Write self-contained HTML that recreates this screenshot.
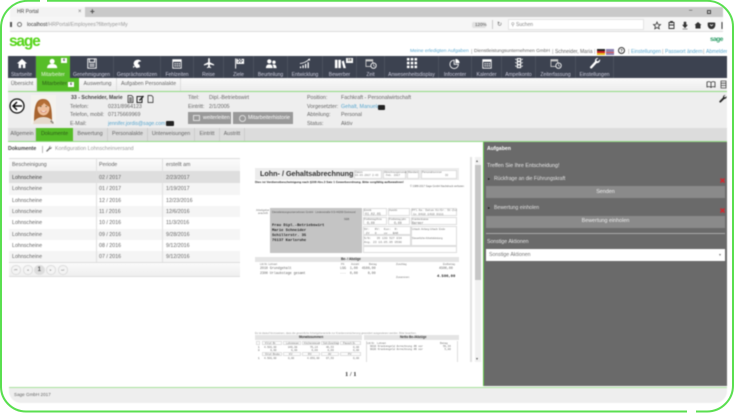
<!DOCTYPE html>
<html lang="de">
<head>
<meta charset="utf-8">
<title>HR Portal</title>
<style>
html,body{margin:0;padding:0;background:#fff}
#p{position:relative;width:735px;height:413px;overflow:hidden;background:#fff;font-family:"Liberation Sans",sans-serif;color:#666}
#c{position:absolute;left:0;top:0;width:735px;height:413px;filter:blur(.4px)}
.t{position:absolute;white-space:nowrap;font-size:5.3px;line-height:8px;height:8px}
.b{position:absolute}
.n{position:absolute;top:56px;height:22px;border-right:1px solid #4b525e;box-sizing:border-box}
.n span{position:absolute;left:-20px;right:-20px;bottom:-.5px;text-align:center;color:#ccd;font-size:5px;line-height:7px;white-space:nowrap}
.n svg{position:absolute;left:50%;top:2px;width:12px;height:11px;margin-left:-6px}
.s{position:absolute;top:78px;height:13px;border-right:1px solid #ddd;box-sizing:border-box;text-align:center;font-size:5.3px;line-height:13px;color:#666;white-space:nowrap}
.tb{position:absolute;top:128px;height:13px;border-right:1px solid #ccc;box-sizing:border-box;text-align:center;font-size:5.3px;line-height:13px;color:#666;white-space:nowrap}
.r{position:absolute;left:9px;width:231px;height:11.3px}
.r i{position:absolute;top:2px;font-style:normal;font-size:5.3px;line-height:8px;color:#666;white-space:nowrap}
.r i:nth-child(1){left:3px}.r i:nth-child(2){left:90px}.r i:nth-child(3){left:157px}
.pg{position:absolute;top:265px;width:9.5px;height:9.5px;border:1px solid #ddd;border-radius:50%;box-sizing:border-box;text-align:center;font-size:3.5px;line-height:8px;color:#999;background:#f4f4f4}
.d{position:absolute;white-space:nowrap;color:#777;font-size:2.6px;line-height:3px}
.m{font-family:"Liberation Mono",monospace}
.bx{position:absolute;border:.5px solid #ddd;box-sizing:border-box;background:#fff}
</style>
</head>
<body>
<div id="p"><div id="c">

<!-- browser chrome -->
<div class="b" style="left:10px;top:7px;width:713px;height:10px;background:#c9c9c9"></div>
<div class="b" style="left:10px;top:7px;width:75px;height:10px;background:#f3f3f3"></div>
<div class="t" style="left:17px;top:8px;color:#444;font-size:5px">HR Portal</div>
<div class="t" style="left:78px;top:8px;color:#777;font-size:6px">×</div>
<div class="t" style="left:90px;top:8px;color:#444;font-size:8px;font-weight:bold">+</div>
<div class="t" style="left:689px;top:7px;color:#333;font-size:6px">–</div>
<div class="b" style="left:707px;top:10px;width:4px;height:4px;border:.7px solid #444;box-sizing:border-box"></div>
<div class="b" style="left:10px;top:17px;width:713px;height:15px;background:#f6f6f6;border-bottom:1px solid #ddd;box-sizing:border-box"></div>
<div class="b" style="left:10px;top:22px;width:2px;height:5px;background:#555"></div>
<div class="b" style="left:17px;top:22px;width:5px;height:5px;border:.6px solid #777;border-radius:50%;box-sizing:border-box"></div>
<div class="t" style="left:27px;top:21px;color:#999;font-size:5.1px"><span style="color:#333">localhost</span>/HRPortal/Employees?filtertype=My</div>
<div class="b" style="left:472px;top:22px;width:14px;height:6px;background:#e2e2e2;border-radius:2px"></div>
<div class="t" style="left:475px;top:21px;color:#555;font-size:4.6px">120%</div>
<div class="b" style="left:492px;top:20px;width:.7px;height:9px;background:#ccc"></div>
<div class="t" style="left:497px;top:21px;color:#666;font-size:6px">↻</div>
<div class="b" style="left:508px;top:19px;width:136px;height:11px;background:#fff;border:.5px solid #e4e4e4;box-sizing:border-box"></div>
<div class="t" style="left:511px;top:21px;color:#888;font-size:5px">⚲ Suchen</div>
<svg class="b" style="left:650px;top:19px" width="74" height="12" viewBox="0 0 74 12">
<path d="M7 3l1 2.4 2.5.2-1.9 1.7.6 2.5L7 8.5 4.800 9.800l.6-2.500-1.900-1.700 2.500-.2z" fill="none" stroke="#333" stroke-width=".8"/>
<path d="M19 3.500h5v6h-5zM20.500 3.500v-1h2v1M19 6h5" fill="none" stroke="#333" stroke-width=".9"/>
<path d="M34 3v3h-1.500l2.500 3 2.500-3H36V3zM32.500 10h5" fill="#333" stroke="#333" stroke-width=".5"/>
<path d="M48 3l3.500 3H50.500v3.500h-5V6h-1z" fill="#333"/>
<path d="M58.500 3.500h6a.8.8 0 0 1 .8.8v2a3.800 3.800 0 0 1-7.600 0v-2a.8.8 0 0 1 .8-.8z" fill="#333"/><path d="M60 5.500l1.500 1.300L63 5.500" stroke="#fff" fill="none" stroke-width=".8"/>
<path d="M72 3v7" stroke="#333"/>
</svg>

<!-- page header -->
<div class="t" style="left:9px;top:33px;height:17px;line-height:17px;color:#56d51a;font-size:15.500px;font-weight:bold;letter-spacing:-1.200px">sage</div>
<div class="t" style="left:710px;top:36px;color:#2f9e68;font-size:6.500px;font-weight:bold;letter-spacing:-.5px">sage</div>
<div class="t" style="left:410px;top:48px;color:#5aa7cf;font-size:4.950px">Meine erledigten Aufgaben</div>
<div class="t" style="left:471px;top:48px;color:#999;font-size:5px">|</div>
<div class="t" style="left:474px;top:48px;color:#666;font-size:4.800px">Dienstleistungsunternehmen GmbH</div>
<div class="t" style="left:552px;top:48px;color:#999;font-size:5px">|</div>
<div class="t" style="left:555px;top:48px;color:#666;font-size:5px">Schneider, Maria</div>
<div class="t" style="left:594px;top:48px;color:#999;font-size:5px">|</div>
<div class="b" style="left:597px;top:49px;width:8px;height:6px;background:linear-gradient(#222 33%,#c22 33%,#c22 66%,#e8c020 66%)"></div>
<div class="b" style="left:606px;top:49px;width:8px;height:6px;background:#8a80b0"></div>
<div class="b" style="left:606px;top:51.500px;width:8px;height:1px;background:#d55"></div>
<div class="b" style="left:618px;top:47px;width:7px;height:7px;border:.8px solid #333;border-radius:50%;box-sizing:border-box;font-size:4.500px;line-height:5.500px;text-align:center;color:#333;font-weight:bold">?</div>
<div class="t" style="left:628px;top:48px;color:#999;font-size:5px">|</div>
<div class="t" style="left:631px;top:48px;color:#5aa7cf;font-size:5px">Einstellungen</div>
<div class="t" style="left:662px;top:48px;color:#999;font-size:5px">|</div>
<div class="t" style="left:665px;top:48px;color:#5aa7cf;font-size:5px">Passwort ändern</div>
<div class="t" style="left:703px;top:48px;color:#999;font-size:5px">|</div>
<div class="t" style="left:706px;top:48px;width:21px;overflow:hidden;color:#5aa7cf;font-size:5px">Abmelden</div>

<!-- nav -->
<div class="b" style="left:8px;top:55.500px;width:719px;height:23px;background:#3c4250"></div>
<div class="n" style="left:8px;width:28px"><svg viewBox="0 0 14 13"><path d="M7 1L1 6.500h2V12h3V8h2v4h3V6.500h2z" fill="#fff"/></svg><span>Startseite</span></div>
<div class="n" style="left:36px;width:34px;background:#56bd28;border:0"><svg viewBox="0 0 14 13"><circle cx="6" cy="4" r="3" fill="#fff"/><path d="M0 12c0-4 3-5 6-5s6 1 6 5z" fill="#fff"/></svg><span style="color:#e8f5e0">Mitarbeiter</span></div>
<div class="b" style="left:61px;top:58px;width:6px;height:5px;background:#fff;color:#333;font-size:3.800px;line-height:5px;text-align:center;font-weight:bold">6</div>
<div class="n" style="left:70px;width:44px"><svg viewBox="0 0 14 13"><path d="M2 1h10v11H2zM4 1v4h6V1M4 7.500h6M4 9.500h6" fill="none" stroke="#fff" stroke-width="1.100"/></svg><span>Genehmigungen</span></div>
<div class="n" style="left:114px;width:47px"><svg viewBox="0 0 14 13"><path d="M3 7a5 5 0 0 1 9-3L9 4.500 8 7l2 1 .5 3-4 1-2-2z" fill="#fff"/><path d="M4.500 10l-2 2v-3" fill="#fff"/></svg><span>Gesprächsnotizen</span></div>
<div class="n" style="left:161px;width:33px"><svg viewBox="0 0 14 13"><path d="M2 2h10v10H2z" fill="none" stroke="#fff"/><path d="M2 2h10v2.500H2z" fill="#fff"/><path d="M4 6h1.500v1.500H4zM6.500 6H8v1.500H6.500zM9 6h1.500v1.500H9zM4 8.500h1.500V10H4zM6.500 8.500H8V10H6.500zM9 8.500h1.500V10H9z" fill="#fff"/></svg><span>Fehlzeiten</span></div>
<div class="n" style="left:194px;width:30px"><svg viewBox="0 0 14 13"><path d="M7 0c.7 0 1 .8 1 1.500V5l5 2.500v1.300L8 7.500V10l1.500 1.200V12L7 11.400 4.500 12v-.8L6 10V7.500L1 8.800V7.500L6 5V1.500C6 .8 6.300 0 7 0z" fill="#fff"/></svg><span>Reise</span></div>
<div class="n" style="left:224px;width:30px"><svg viewBox="0 0 14 13"><path d="M3 0.500v12" stroke="#fff" stroke-width="1.200"/><path d="M4 1h9v6H4z" fill="#fff"/><path d="M5.500 1h1.500v1.500H5.500zM8.500 1H10v1.500H8.500zM7 2.500h1.500V4H7zM10 2.500h1.500V4H10zM5.500 4H7v1.500H5.500zM8.500 4H10v1.500H8.500z" fill="#3c4250"/></svg><span>Ziele</span></div>
<div class="n" style="left:254px;width:34px"><svg viewBox="0 0 14 13"><circle cx="5" cy="4" r="2.500" fill="#fff"/><circle cx="10.500" cy="5" r="2" fill="#fff"/><path d="M1 12c0-3.500 2-4.500 4-4.500s4 1 4 4.500zM9.800 12c0-2-.3-3.200-1.200-4 3-1 5 .5 5 4z" fill="#fff"/></svg><span>Beurteilung</span></div>
<div class="n" style="left:288px;width:35px"><svg viewBox="0 0 14 13"><path d="M1 10h1.500v2H1zM4 8.500h1.500V12H4zM7 7h1.500v5H7zM10 5h1.500v7H10z" fill="#fff"/><path d="M1 6.500Q7 6 12 1.500" fill="none" stroke="#fff"/><path d="M13 .5l-.2 3-2.500-2z" fill="#fff"/></svg><span>Entwicklung</span></div>
<div class="n" style="left:323px;width:34px"><svg viewBox="0 0 14 13"><path d="M1 2h3v10H1zM5 2h3v10H5zM9 4l2.500-1L14 12h-3z" fill="#fff"/></svg><span>Bewerber</span></div>
<div class="b" style="left:346px;top:58px;width:7px;height:5px;background:#fff;color:#333;font-size:3.800px;line-height:5px;text-align:center;font-weight:bold">18</div>
<div class="n" style="left:357px;width:28px"><svg viewBox="0 0 14 13"><path d="M1 2h8v8H1z" fill="none" stroke="#ccc"/><path d="M1 2h8v2H1z" fill="#ccc"/><circle cx="10" cy="9" r="3.200" fill="#3c4250" stroke="#fff"/><path d="M10 7v2l1.500 1" fill="none" stroke="#fff" stroke-width=".7"/></svg><span>Zeit</span></div>
<div class="n" style="left:385px;width:54px"><svg viewBox="0 0 14 13"><path d="M1 0h3v3H1zM5.500 0h3v3h-3zM10 0h3v3h-3zM1 4.500h3v3H1zM5.500 4.500h3v3h-3zM10 4.500h3v3h-3zM1 9h3v3H1zM5.500 9h3v3h-3zM10 9h3v3h-3z" fill="#fff"/></svg><span>Anwesenheitsdisplay</span></div>
<div class="n" style="left:439px;width:33px"><svg viewBox="0 0 14 13"><path d="M6 2.500a5 5 0 1 0 5 5H6z" fill="none" stroke="#fff"/><path d="M7.500 1a5 5 0 0 1 5 5h-5z" fill="#fff"/></svg><span>Infocenter</span></div>
<div class="n" style="left:472px;width:30px"><svg viewBox="0 0 14 13"><path d="M2 2h10v10H2z" fill="none" stroke="#fff"/><path d="M2 2h10v2.500H2z" fill="#fff"/><path d="M4 6h1.500v1.500H4zM6.500 6H8v1.500H6.500zM9 6h1.500v1.500H9zM4 8.500h1.500V10H4zM6.500 8.500H8V10H6.500zM9 8.500h1.500V10H9z" fill="#fff"/></svg><span>Kalender</span></div>
<div class="n" style="left:502px;width:34px"><svg viewBox="0 0 14 13"><path d="M4.500 0h5v12h-5z" fill="#fff"/><path d="M2 1h2v2zM12 1h-2v2zM2 5h2v2zM12 5h-2v2zM2 9h2v2zM12 9h-2v2z" fill="#fff"/><circle cx="7" cy="2.200" r="1.200" fill="#3c4250"/><circle cx="7" cy="6" r="1.200" fill="#3c4250"/><circle cx="7" cy="9.800" r="1.200" fill="#3c4250"/></svg><span>Ampelkonto</span></div>
<div class="n" style="left:536px;width:40px"><svg viewBox="0 0 14 13"><path d="M1 2h8v8H1z" fill="none" stroke="#ccc"/><path d="M1 2h8v2H1z" fill="#ccc"/><circle cx="10" cy="9" r="3.200" fill="#3c4250" stroke="#fff"/><path d="M10 7v2l1.500 1" fill="none" stroke="#fff" stroke-width=".7"/></svg><span>Zeiterfassung</span></div>
<div class="n" style="left:576px;width:38px"><svg viewBox="0 0 14 13"><path d="M13 1.500L10.500 4l-1.500-.5L8.500 2 11 0C8.500-.5 6.500 1.500 7 4L1.500 10a1.400 1.400 0 0 0 2 2L9 6c2.500.5 4.500-2 4-4.500z" fill="#fff"/></svg><span>Einstellungen</span></div>

<!-- subnav -->
<div class="b" style="left:8px;top:78px;width:719px;height:13px;background:linear-gradient(#fafafa,#ececec)"></div>
<div class="s" style="left:8px;width:29px">Übersicht</div>
<div class="s" style="left:37px;width:42px;background:#56bd28;color:#2d5c18;border:0;text-align:left;padding-left:5px">Mitarbeiter</div>
<div class="b" style="left:68px;top:81.500px;width:6px;height:5.500px;background:#fff;color:#333;font-size:3.800px;line-height:5.500px;text-align:center;font-weight:bold">6</div>
<div class="s" style="left:79px;width:38px">Auswertung</div>
<div class="s" style="left:117px;width:64px">Aufgaben Personalakte</div>
<svg class="b" style="left:705px;top:80px" width="22" height="9" viewBox="0 0 22 9"><path d="M2 2c1.500-.5 3-.5 4 .5 1-1 2.500-1 4-.5v5c-1.500-.5-3-.5-4 .5-1-1-2.500-1-4-.5zM6 2.500v5" fill="none" stroke="#333" stroke-width=".8"/><path d="M16 1h5v7h-5zM16 3.200h5M16 5.500h5" fill="none" stroke="#444" stroke-width=".8"/></svg>
<div class="b" style="left:8px;top:91px;width:719px;height:1px;background:#92dc83"></div>

<!-- employee header -->
<div class="b" style="left:8px;top:92px;width:719px;height:36px;background:#eee"></div>
<svg class="b" style="left:9px;top:98px" width="16" height="16" viewBox="0 0 16 16"><circle cx="8" cy="8" r="7" fill="#fff" stroke="#111" stroke-width="1.300"/><path d="M13 8H4M8 4L4 8l4 4" fill="none" stroke="#111" stroke-width="1.500"/></svg>
<svg class="b" style="left:31px;top:95px" width="25" height="29" viewBox="0 0 25 29"><rect width="25" height="29" fill="#f4f2ee"/><path d="M3 28c0-14 1-24 9-24s9 9 9 24z" fill="#a8642f"/><ellipse cx="12.500" cy="13" rx="6" ry="7.500" fill="#eebf9c"/><path d="M6 12c1-6 5-7 7-7s5 2 6 7c-3-1-5-3-6-4-1 2-4 4-7 4z" fill="#b46f36"/><path d="M2 29c1-5 6-7 10.500-7s9 2 10.500 7z" fill="#e6d9cc"/><path d="M9.500 16q3 2.500 6 0" fill="#fff" stroke="#c56a5c" stroke-width=".6"/><path d="M9 11.500h1.500M14.500 11.500H16" stroke="#553" stroke-width=".8"/></svg>
<div class="t" style="left:50px;top:119px;color:#444;font-size:5px">✎</div>

<div class="t" style="left:71px;top:94px;color:#444;font-weight:bold;font-size:5.200px">33 - Schneider, Marie</div>
<svg class="b" style="left:127px;top:95px" width="28" height="8" viewBox="0 0 28 8"><path d="M1 .5h3.500L6 2v5.500H1zM2 3h3M2 4.500h3M2 6h3" fill="none" stroke="#222" stroke-width=".7"/><path d="M10 1.500h5v6h-5z" fill="none" stroke="#222"/><path d="M12 5l4-4.500 1 1-4 4.500z" fill="#222"/><path d="M21 .5h3.500L26 2v5.500h-5z" fill="none" stroke="#222" stroke-width=".7"/></svg>
<div class="t" style="left:70px;top:103px">Telefon:</div><div class="t" style="left:108px;top:103px">0231/8964123</div>
<div class="t" style="left:70px;top:111px">Telefon, mobil:</div><div class="t" style="left:108px;top:111px">07175669969</div>
<div class="t" style="left:70px;top:119.500px">E-Mail:</div><div class="t" style="left:108px;top:119.500px;color:#5aa7cf;font-size:5.100px">jennifer.jordis@sage.com</div>
<div class="b" style="left:166px;top:121px;width:8px;height:5px;background:#222;border-radius:1px"></div>

<div class="t" style="left:188px;top:94px">Titel:</div><div class="t" style="left:209px;top:94px">Dipl.-Betriebswirt</div>
<div class="t" style="left:188px;top:103px">Eintritt:</div><div class="t" style="left:209px;top:103px">2/1/2005</div>
<div class="b" style="left:188px;top:112px;width:43px;height:12px;background:#999;color:#fff;font-size:5.300px;line-height:12px;text-indent:15px;white-space:nowrap">weiterleiten</div>
<div class="b" style="left:193px;top:115px;width:7px;height:5.500px;border:.7px solid #ddd;box-sizing:border-box"></div>
<div class="b" style="left:233px;top:112px;width:60px;height:12px;background:#999;color:#fff;font-size:5.300px;line-height:12px;text-indent:15px;white-space:nowrap">Mitarbeiterhistorie</div>
<div class="b" style="left:239px;top:114.500px;width:7px;height:7px;border:.8px solid #ddd;border-radius:50%;box-sizing:border-box"></div>

<div class="t" style="left:307px;top:94px">Position:</div><div class="t" style="left:341px;top:94px">Fachkraft - Personalwirtschaft</div>
<div class="t" style="left:307px;top:103px">Vorgesetzter:</div><div class="t" style="left:341px;top:103px;color:#5aa7cf">Gehalt, Manuela</div>
<div class="b" style="left:378px;top:104.500px;width:7px;height:5px;background:#222;border-radius:1px"></div>
<div class="t" style="left:307px;top:111px">Abteilung:</div><div class="t" style="left:341px;top:111px">Personal</div>
<div class="t" style="left:307px;top:119.500px">Status:</div><div class="t" style="left:341px;top:119.500px">Aktiv</div>
<svg class="b" style="left:719px;top:95px" width="8" height="8" viewBox="0 0 8 8"><path d="M7.500 1.200L6 2.500 5.300 2 5 1.300 6.500 0C5-.2 3.800 1 4 2.500L.6 6A.9.900 0 0 0 1.900 7.300L5.300 4C6.800 4.200 8 2.800 7.500 1.200z" fill="#222"/></svg>

<!-- tabs -->
<div class="b" style="left:8px;top:128px;width:719px;height:13px;background:#dcdcdc"></div>
<div class="tb" style="left:9px;width:27px">Allgemein</div>
<div class="tb" style="left:36px;width:37px;background:#56bd28;color:#2d5c18;border:0">Dokumente</div>
<div class="tb" style="left:73px;width:35px">Bewertung</div>
<div class="tb" style="left:108px;width:40px">Personalakte</div>
<div class="tb" style="left:148px;width:47px">Unterweisungen</div>
<div class="tb" style="left:195px;width:25px">Eintritt</div>
<div class="tb" style="left:220px;width:25px">Austritt</div>
<div class="b" style="left:8px;top:141px;width:719px;height:1px;background:#92dc83"></div>

<!-- doc list -->
<div class="t" style="left:8px;top:145px;color:#444;font-weight:bold;font-size:5.200px">Dokumente</div>
<div class="b" style="left:41.500px;top:146px;width:.5px;height:7px;background:#bbb"></div>
<svg class="b" style="left:46px;top:146px" width="6" height="6" viewBox="0 0 8 8"><path d="M7.500 1.200L6 2.500 5.300 2 5 1.300 6.500 0C5-.2 3.800 1 4 2.500L.6 6A.9.900 0 0 0 1.900 7.300L5.300 4C6.800 4.200 8 2.800 7.500 1.200z" fill="#777"/></svg>
<div class="t" style="left:55px;top:145px;color:#999">Konfiguration Lohnscheinversand</div>

<div class="b" style="left:9px;top:158px;width:231px;height:14px;background:linear-gradient(#fbfbfb,#f2f2f2);border-top:.5px solid #ddd;border-bottom:.5px solid #ddd;box-sizing:border-box"></div>
<div class="t" style="left:12px;top:161px;color:#666">Bescheinigung</div>
<div class="t" style="left:99px;top:161px;color:#666">Periode</div>
<div class="t" style="left:166px;top:161px;color:#666">erstellt am</div>

<div class="r" style="top:172px;background:#dedede"><i style="color:#444">Lohnscheine</i><i>02 / 2017</i><i>2/23/2017</i></div>
<div class="r" style="top:183.300px;background:#f5f5f5"><i>Lohnscheine</i><i>01 / 2017</i><i>1/19/2017</i></div>
<div class="r" style="top:194.600px;background:#fff"><i>Lohnscheine</i><i>12 / 2016</i><i>12/23/2016</i></div>
<div class="r" style="top:205.900px;background:#f5f5f5"><i>Lohnscheine</i><i>11 / 2016</i><i>12/6/2016</i></div>
<div class="r" style="top:217.200px;background:#fff"><i>Lohnscheine</i><i>10 / 2016</i><i>11/3/2016</i></div>
<div class="r" style="top:228.500px;background:#f5f5f5"><i>Lohnscheine</i><i>09 / 2016</i><i>9/28/2016</i></div>
<div class="r" style="top:239.800px;background:#fff"><i>Lohnscheine</i><i>08 / 2016</i><i>9/12/2016</i></div>
<div class="r" style="top:251.100px;background:#f5f5f5"><i>Lohnscheine</i><i>07 / 2016</i><i>9/12/2016</i></div>
<div class="b" style="left:96px;top:158px;width:.5px;height:104px;background:#e0e0e0"></div>
<div class="b" style="left:162px;top:158px;width:.5px;height:104px;background:#e0e0e0"></div>
<div class="b" style="left:9px;top:262px;width:231px;height:15px;background:linear-gradient(#fafafa,#efefef);border-top:.5px solid #ddd;border-bottom:.5px solid #ddd;box-sizing:border-box"></div>
<div class="pg" style="left:11px">⏮</div>
<div class="pg" style="left:23px">◂</div>
<div class="pg" style="left:34px;width:10.500px;height:10.500px;top:264.500px;background:#ddd;color:#555;font-size:6px;line-height:9px;font-weight:bold">1</div>
<div class="pg" style="left:46px">▸</div>
<div class="pg" style="left:58px">⏭</div>

<!-- pdf preview -->
<div class="b" style="left:255px;top:168px;width:204px;height:12px;background:#ececec"></div>
<div class="t" style="left:260px;top:169px;height:10px;line-height:10px;color:#333;font-size:7.200px;font-weight:bold">Lohn- / Gehaltsabrechnung</div>
<div class="bx" style="left:354px;top:170px;width:28px;height:8.500px"></div>
<div class="bx" style="left:383px;top:170px;width:23px;height:8.500px"></div>
<div class="bx" style="left:407px;top:170px;width:12px;height:8.500px"></div>
<div class="bx" style="left:421px;top:170px;width:36px;height:8.500px"></div>
<div class="d" style="left:355px;top:170.500px">Datum</div><div class="d m" style="left:355px;top:174px">03.03.2017 2:43</div>
<div class="d" style="left:384px;top:170.500px">Abrechnungsmonat</div><div class="d m" style="left:386px;top:174px">Feb. 2017</div>
<div class="d" style="left:408px;top:170.500px">Mandant</div>
<div class="d" style="left:422px;top:170.500px">Personalnummer</div><div class="d m" style="left:445px;top:174px">33</div>
<div class="d" style="left:255px;top:180.500px;color:#222;font-weight:bold;font-size:3px;line-height:3.500px">Dies ist Verdienstbescheinigung nach §108 Abs.3 Satz 1 Gewerbeordnung. Bitte sorgfältig aufbewahren!</div>
<div class="d" style="left:410px;top:184.500px;color:#666">© 1988-2017 Sage GmbH Nachdruck verboten</div>

<div class="d" style="left:256px;top:209px">Arbeitgeber</div><div class="d" style="left:258px;top:212px">anschrift</div>
<div class="b" style="left:270px;top:208px;width:92px;height:45px;background:#c4c4c4"></div>
<div class="d" style="left:272px;top:210.500px;color:#555">Dienstleistungsunternehmen GmbH · Lindenstraße 9 D-44269 Dortmund</div>
<div class="d" style="left:344px;top:218px;color:#555">SEB</div>
<div class="d m" style="left:272px;top:223.500px;color:#222;font-size:3.800px;line-height:5px;font-weight:bold;white-space:pre">Frau Dipl.-Betriebswirt
Marie Schneider
Schillerstr. 35
76137 Karlsruhe</div>

<div class="bx" style="left:363px;top:208px;width:24px;height:8px"></div>
<div class="d" style="left:364px;top:208.500px">Eintritt</div><div class="d m" style="left:365px;top:212px;font-size:3.300px;line-height:4px">01.02.05</div>
<div class="bx" style="left:388px;top:208px;width:22px;height:8px"></div><div class="d" style="left:389px;top:208.500px">Austritt</div>
<div class="bx" style="left:411px;top:208px;width:46px;height:8px"></div>
<div class="d m" style="left:412px;top:209px;font-size:2.800px;line-height:3.500px">Pfl.Ka. Datum Kz/Gr. St-Zst</div>
<div class="d m" style="left:413px;top:212.500px;font-size:3px;line-height:3.500px">1x  0410 1410 0111</div>
<div class="bx" style="left:363px;top:217px;width:24px;height:8px"></div><div class="d" style="left:364px;top:217.500px">Freibetrag/Anw.</div><div class="d m" style="left:367px;top:221px;font-size:3.200px;line-height:4px">0,00</div>
<div class="bx" style="left:388px;top:217px;width:22px;height:8px"></div><div class="d" style="left:389px;top:217.500px">Freibetrag jahr.</div><div class="d m" style="left:394px;top:221px;font-size:3.200px;line-height:4px">0,00</div>
<div class="bx" style="left:411px;top:217px;width:46px;height:8px"></div><div class="d" style="left:412px;top:217.500px">Krankenkasse</div><div class="d m" style="left:412px;top:221px;font-size:3.200px;line-height:4px">Barmer</div>
<div class="bx" style="left:363px;top:226px;width:48px;height:9px"></div><div class="d m" style="left:364px;top:228px;font-size:3px;line-height:3.500px;white-space:pre">SV:   RV:  Kon:  R:
 2V   0    uv   BAR</div>
<div class="bx" style="left:363px;top:235px;width:48px;height:11px"></div><div class="d m" style="left:364px;top:237px;font-size:3px;line-height:4px;white-space:pre">S/N:   35 130 527 034
Ang. 23 16.05.05 0500</div>
<div class="bx" style="left:411px;top:226px;width:46px;height:20px"></div>
<div class="d" style="left:412px;top:228px">Urlaub: Anfang     Urlaub: Ende</div>
<div class="d" style="left:412px;top:237px">Steuerliche Arbeitsleistung</div>
<div class="bx" style="left:363px;top:246px;width:94px;height:7px"></div>

<div class="b" style="left:255px;top:257px;width:204px;height:5px;background:#e4e4e4"></div>
<div class="d" style="left:341px;top:258px;color:#333;font-weight:bold;font-size:3.300px">Be- / Abzüge</div>
<div class="d" style="left:260px;top:263px">Lfd.Nr.    Lohnart</div>
<div class="d" style="left:341px;top:263px">PK</div><div class="d" style="left:351px;top:263px">Anzahl</div><div class="d" style="left:369px;top:263px">Betrag</div><div class="d" style="left:396px;top:263px">Zuschlag</div><div class="d" style="left:443px;top:263px">Endbetrag</div>
<div class="d m" style="left:260px;top:266px;font-size:3.300px;line-height:5px;white-space:pre;color:#666">2010 Grundgehalt
2300 Urlaubstage gesamt</div>
<div class="d m" style="left:340px;top:266px;font-size:3.300px;line-height:5px;white-space:pre;color:#666">LGG  1,00  4500,00
---  0,00     0,00</div>
<div class="d m" style="left:439px;top:266px;font-size:3.300px;line-height:5px;color:#666">4500,00</div>
<div class="d" style="left:396px;top:276px">Zusammen:</div>
<div class="d m" style="left:437px;top:275px;color:#222;font-weight:bold;font-size:3.800px;line-height:5px">4.500,00</div>

<div class="d" style="left:255px;top:332px;color:#999">Es ist darauf hinzuweisen, dass die gesetzliche Arbeitgeberanteile zur Krankenversicherung gesondert ausgewiesen werden. Bitte beachten.</div>
<div class="b" style="left:255px;top:335px;width:107px;height:5px;background:#e4e4e4"></div>
<div class="d" style="left:299px;top:336px;color:#333;font-weight:bold;font-size:3.200px">Monatssummen</div>
<div class="b" style="left:364px;top:335px;width:95px;height:5px;background:#e4e4e4"></div>
<div class="d" style="left:400px;top:336px;color:#333;font-weight:bold;font-size:3.200px">Netto Be-/Abzüge</div>
<div class="bx" style="left:256px;top:341px;width:4px;height:4px"></div><div class="bx" style="left:262px;top:341px;width:20px;height:4px"></div><div class="bx" style="left:283px;top:341px;width:18px;height:4px"></div><div class="bx" style="left:302px;top:341px;width:18px;height:4px"></div><div class="bx" style="left:321px;top:341px;width:18px;height:4px"></div><div class="bx" style="left:340px;top:341px;width:21px;height:4px"></div>
<div class="d" style="left:265px;top:341.500px">KV-pf. Br.</div><div class="d" style="left:286px;top:341.500px">Lohnsteuer</div><div class="d" style="left:304px;top:341.500px">Kirchensteuer</div><div class="d" style="left:323px;top:341.500px">Soli-Zuschlag</div><div class="d" style="left:343px;top:341.500px">Pausch.St.</div>
<div class="d m" style="left:258px;top:345.500px;line-height:3px;white-space:pre;color:#555">1
8</div>
<div class="d m" style="left:264px;top:345.500px;line-height:3px;white-space:pre;color:#666">4.500,00
    0,00</div>
<div class="d m" style="left:288px;top:345.500px;line-height:3px;white-space:pre;color:#666">846,08
  0,00</div>
<div class="d m" style="left:310px;top:345.500px;line-height:3px;white-space:pre;color:#666">76,14
 0,00</div>
<div class="d m" style="left:326px;top:345.500px;line-height:3px;white-space:pre;color:#666">46,53
 0,00</div>
<div class="d m" style="left:353px;top:345.500px;line-height:3px;white-space:pre;color:#666">0,00
0,00</div>
<div class="bx" style="left:262px;top:352px;width:20px;height:4px"></div><div class="bx" style="left:283px;top:352px;width:18px;height:4px"></div><div class="bx" style="left:302px;top:352px;width:18px;height:4px"></div><div class="bx" style="left:321px;top:352px;width:18px;height:4px"></div><div class="bx" style="left:340px;top:352px;width:21px;height:4px"></div>
<div class="d" style="left:265px;top:352.500px">SV-pf. Brutto</div><div class="d" style="left:289px;top:352.500px">KV</div><div class="d" style="left:308px;top:352.500px">RV</div><div class="d" style="left:328px;top:352.500px">AV</div><div class="d" style="left:348px;top:352.500px">PV</div>
<div class="d m" style="left:258px;top:356.500px;line-height:3px;color:#555">1</div>
<div class="d m" style="left:264px;top:356.500px;line-height:3px;white-space:pre;color:#666">4.500,00</div>
<div class="d m" style="left:288px;top:356.500px;line-height:3px;color:#666">0,00</div>
<div class="d m" style="left:307px;top:356.500px;line-height:3px;color:#666">4.050,00</div>
<div class="d m" style="left:326px;top:356.500px;line-height:3px;color:#666">67,50</div>
<div class="d m" style="left:353px;top:356.500px;line-height:3px;color:#666">0,00</div>
<div class="b" style="left:366px;top:341px;width:.5px;height:21px;background:#ddd"></div>
<div class="b" style="left:457px;top:341px;width:.5px;height:21px;background:#ddd"></div>
<div class="d" style="left:367px;top:341.500px">Lfd.Nr.</div><div class="d" style="left:377px;top:341.500px">Lohnart</div><div class="d" style="left:440px;top:341.500px">Betrag</div>
<div class="d m" style="left:370px;top:345px;line-height:3px;white-space:pre;color:#666">9010 Krankengeld Anrechnung AN vor
9020 Krankengeld Anrechnung AN vor</div>
<div class="d m" style="left:443px;top:345px;line-height:3px;white-space:pre;color:#666">56,34
 5,80</div>
<div class="t" style="left:345px;top:371px;color:#333;font-family:'Liberation Serif',serif;font-weight:bold;font-size:6.500px">1 / 1</div>

<!-- scrollbar -->
<div class="b" style="left:470px;top:157px;width:2px;height:205px;background:#e2e2e2"></div>
<div class="b" style="left:475px;top:157px;width:6px;height:205px;background:#f1f1f1"></div>
<div class="b" style="left:475px;top:165px;width:6px;height:115px;background:#c6c6c6"></div>
<div class="t" style="left:476px;top:157px;color:#555;font-size:4px">▴</div>
<div class="t" style="left:476px;top:355px;color:#555;font-size:4px">▾</div>

<!-- right panel -->
<div class="b" style="left:483px;top:142px;width:244px;height:244px;background:#6a6a6a;border-left:1px solid #5ec445;box-sizing:border-box"></div>
<div class="t" style="left:487px;top:145px;color:#fff;font-weight:bold;font-size:5.200px">Aufgaben</div>
<div class="t" style="left:487px;top:162px;color:#e8e8e8;font-size:5.400px">Treffen Sie Ihre Entscheidung!</div>
<div class="t" style="left:488px;top:175px;color:#111;font-size:4px">▸</div>
<div class="t" style="left:494px;top:175px;color:#e0e0e0;font-size:5.100px">Rückfrage an die Führungskraft</div>
<svg class="b" style="left:719.500px;top:178px" width="5" height="5" viewBox="0 0 5 5"><path d="M.5.500l4 4M4.500.500l-4 4" stroke="#d8232a" stroke-width="1.400"/></svg>
<div class="b" style="left:486px;top:186px;width:239px;height:12px;background:#8a8a8a;color:#eee;text-align:center;font-size:5.400px;line-height:12px">Senden</div>
<div class="t" style="left:488px;top:204px;color:#111;font-size:4px">▸</div>
<div class="t" style="left:494px;top:204px;color:#e0e0e0;font-size:5.100px">Bewertung einholen</div>
<svg class="b" style="left:719.500px;top:207.500px" width="5" height="5" viewBox="0 0 5 5"><path d="M.5.500l4 4M4.500.500l-4 4" stroke="#d8232a" stroke-width="1.400"/></svg>
<div class="b" style="left:486px;top:216px;width:239px;height:11.500px;background:#8a8a8a;color:#eee;text-align:center;font-size:5.400px;line-height:11.500px">Bewertung einholen</div>
<div class="b" style="left:486px;top:233px;width:239px;height:.7px;background:#aaa"></div>
<div class="t" style="left:487px;top:238px;color:#e8e8e8;font-size:5.200px">Sonstige Aktionen</div>
<div class="b" style="left:486px;top:249px;width:239px;height:12px;background:#fff;color:#777;font-size:5.200px;line-height:12px;text-indent:3px">Sonstige Aktionen</div>
<div class="t" style="left:719px;top:251px;color:#777;font-size:4px">▾</div>

<!-- footer -->
<div class="b" style="left:9px;top:387px;width:718px;height:16px;background:#eee;border-top:1px solid #a8e29c;border-radius:0 0 12px 12px;box-sizing:border-box"></div>
<div class="t" style="left:14px;top:391px;color:#666;font-size:4.600px">Sage GmbH 2017</div>

</div>
<!-- frame -->
<svg class="b" style="left:0;top:0" width="735" height="413" viewBox="0 0 735 413">
<path d="M40 .8H28A27 27 0 0 0 1 27.800V386A25 25 0 0 0 26 411.500H687M696 411.500H707A26 26 0 0 0 733 385.500V27A26 26 0 0 0 707 .8H47" fill="none" stroke="#5adf50" stroke-width="2"/>
</svg>
</div>
</body>
</html>
